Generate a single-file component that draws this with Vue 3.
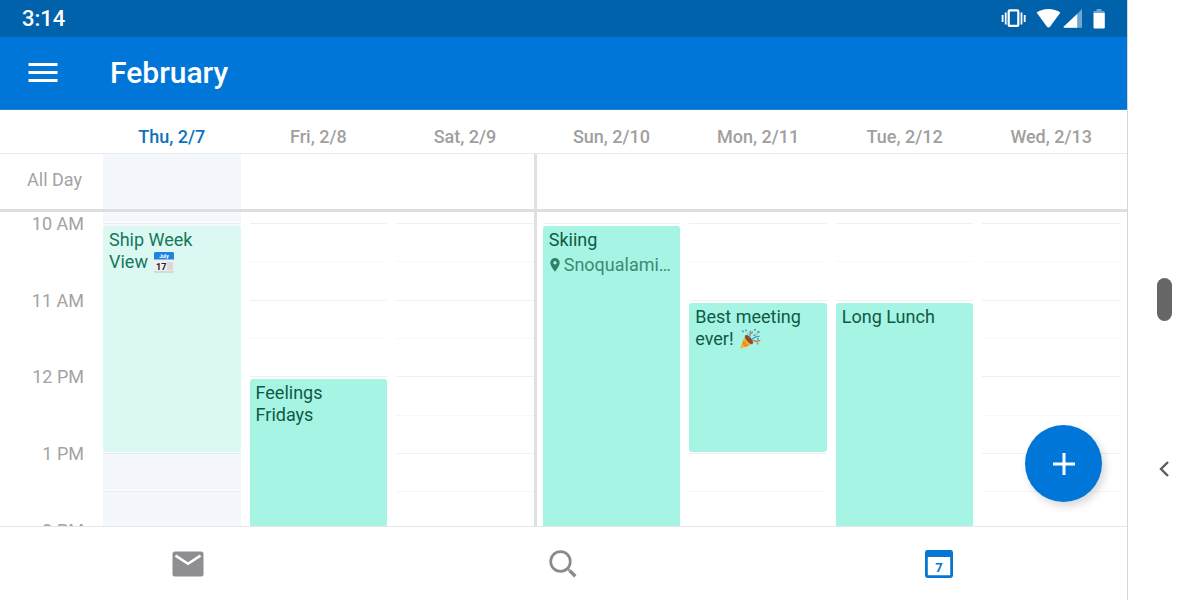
<script setup>
const hours = ['10 AM', '11 AM', '12 PM', '1 PM', '2 PM']

const days = [
  {
    label: 'Thu, 2/7',
    today: true,
    events: [{ lines: ['Ship Week', 'View'], icon: 'calendar', start: 1, end: 7, soft: true }],
  },
  { label: 'Fri, 2/8', events: [{ lines: ['Feelings', 'Fridays'], start: 5, end: 11 }] },
  { label: 'Sat, 2/9', events: [] },
  {
    label: 'Sun, 2/10',
    weekStart: true,
    events: [{ lines: ['Skiing'], place: 'Snoqualami…', start: 1, end: 13 }],
  },
  { label: 'Mon, 2/11', events: [{ lines: ['Best meeting', 'ever!'], icon: 'party', start: 3, end: 7 }] },
  { label: 'Tue, 2/12', events: [{ lines: ['Long Lunch'], start: 3, end: 11 }] },
  { label: 'Wed, 2/13', events: [] },
]
</script>

<template>
  <div class="screen">
    <div class="app">
      <div class="status">
        <span class="clock">3:14</span>
        <svg class="status-icons" width="104" height="22" viewBox="0 0 104 22" aria-hidden="true">
          <rect x="7.7" y="2.3" width="9.6" height="15.6" rx="1" fill="none" stroke="#fff" stroke-width="2.2" />
          <path d="M4.7 4.5v12M20.5 4.5v12" stroke="#fff" stroke-width="1.8" />
          <path d="M1.6 7v7M23.7 7v7" stroke="#fff" stroke-width="1.8" />
          <path d="M35.6 4.6C42-.2 53-.2 59.4 4.6L49.2 18.4Q47.5 20.4 45.8 18.4Z" fill="#fff" />
          <path d="M81 1v18.800H62.600Z" fill="#6fa6d2" />
          <path d="M76.200 6v13.800H63.500Q62 19.500 63 18.200Z" fill="#fff" />
          <path d="M95.500 1h5v2h3v2H92.500V3h3Z" fill="#6fa6d2" />
          <path d="M92.500 5h11.300v14.500q0 1-1 1h-9.300q-1 0-1-1Z" fill="#fff" />
        </svg>
      </div>

      <header class="bar">
        <button class="menu" type="button" aria-label="Menu">
          <svg width="30" height="20" viewBox="0 0 30 20"><path d="M.5 1.500h29M.5 9.500h29M.5 17.500h29" stroke="#fff" stroke-width="3" /></svg>
        </button>
        <h1>February</h1>
      </header>

      <main class="week">
        <div class="row names">
          <div class="gutter"></div>
          <div v-for="d in days" :key="d.label" class="name" :class="{ current: d.today }">{{ d.label }}</div>
        </div>
        <div class="row allday">
          <div class="gutter allday-label">All Day</div>
          <div v-for="d in days" :key="d.label" class="cell" :class="{ today: d.today, divided: d.weekStart }"></div>
        </div>
        <div class="times">
          <div class="row">
            <div class="gutter hours">
              <span v-for="h in hours" :key="h">{{ h }}</span>
            </div>
            <div v-for="d in days" :key="d.label" class="day" :class="{ today: d.today, divided: d.weekStart }">
              <i v-for="n in 12" :key="n" class="slot" :class="{ half: n % 2 === 0 }" :style="{ gridRow: n }"></i>
              <button
                v-for="e in d.events"
                :key="e.start"
                type="button"
                class="event"
                :class="{ soft: e.soft }"
                :style="{ gridRow: e.start + ' / ' + e.end }"
              >
                <span v-for="(line, i) in e.lines" :key="line" class="line">
                  {{ line }}
                  <template v-if="i === e.lines.length - 1">
                    <svg v-if="e.icon === 'calendar'" class="emoji" width="20" height="21" viewBox="0 0 20 21" aria-hidden="true">
                      <rect width="20" height="20.500" rx="1.500" fill="#b9c4c4" />
                      <path d="M0 7h20v11.500q0 1-1 1H1q-1 0-1-1Z" fill="#f0f0f0" />
                      <path d="M1.500 0h17Q20 0 20 1.500V7.500H0V1.500Q0 0 1.500 0Z" fill="#1f83e0" />
                      <path d="M13 11h6M13 13h6M13 15h6M13 17h6M14 10v8.500M16 10v8.500M18 10v8.500" stroke="#c9c3c8" stroke-width=".6" />
                      <text x="10" y="5.500" text-anchor="middle" font-size="5" font-weight="700" fill="#fff">July</text>
                      <text x="2" y="18" font-size="9" font-weight="700" fill="#222">17</text>
                    </svg>
                    <svg v-if="e.icon === 'party'" class="emoji" width="21" height="21" viewBox="0 0 21 21" aria-hidden="true">
                      <path d="M5.300 7 13 16 1.300 20.600Q.2 20.800.5 19.600Z" fill="#f7b52e" />
                      <path d="M3.500 12 8.800 17.600 5.600 18.900 2 16Z" fill="#f08c24" />
                      <ellipse cx="9" cy="11.500" rx="2.500" ry="5.600" transform="rotate(-40 9 11.500)" fill="#8b4b35" />
                      <path d="M9 9.500C12 7 8.500 5 10.700 2.800M12 11.500C14 10 15 8 19.500 8.500" fill="none" stroke="#479dca" stroke-width="1.300" />
                      <path d="M12.500 13.200C15 11 16 15 17.500 13Q18.500 12 20.300 13M17.600 14.500v2" fill="none" stroke="#cc7356" stroke-width="1.300" />
                      <path d="m10 5 2.500-2 .8 1.600-2.500 1.800Z" fill="#da7c59" />
                      <path d="M2 2.500h1.800v1.800H2ZM5.200 1.500h1.500v2H5.200ZM14 1h2v1.500h-2ZM17.500 3h2v2h-2ZM13.500 6.500h2v1.500h-2ZM17 10h1.600v1.500H17Z" fill="#3b9bd2" />
                      <path d="M7 5h1.500v1.500H7ZM16 5h1.500v1.400H16Z" fill="#e7a557" />
                    </svg>
                  </template>
                </span>
                <span v-if="e.place" class="place">
                  <svg width="10" height="14" viewBox="0 0 10 14" aria-hidden="true">
                    <path d="M5 0a4.700 4.700 0 0 0-4.700 4.700C.3 8 5 13.600 5 13.600S9.700 8 9.700 4.700A4.700 4.700 0 0 0 5 0Zm0 3a1.700 1.700 0 1 1 0 3.400A1.700 1.700 0 0 1 5 3Z" fill="#2f8067" fill-rule="evenodd" />
                  </svg>
                  <span class="place-name">{{ e.place }}</span>
                </span>
              </button>
            </div>
          </div>
          <button class="fab" type="button" aria-label="New event">
            <svg width="24" height="24" viewBox="0 0 24 24"><path d="M12 1v22M1 12h22" stroke="#fff" stroke-width="3" /></svg>
          </button>
        </div>
      </main>

      <nav class="tabs">
        <button type="button" aria-label="Mail">
          <svg width="32" height="26" viewBox="0 0 32 26">
            <rect x=".5" y=".5" width="31" height="25" rx="2.500" fill="#8e8e93" />
            <path d="M3.500 4.600 16 12.800 28.500 4.600" fill="none" stroke="#fff" stroke-width="2.600" />
          </svg>
        </button>
        <button type="button" aria-label="Search">
          <svg width="28" height="28" viewBox="0 0 28 28">
            <circle cx="11.500" cy="11.500" r="9.800" fill="none" stroke="#8a8a8a" stroke-width="2.700" />
            <path d="m18.500 18.500 1.800 1.800" stroke="#8a8a8a" stroke-width="2.200" />
            <path d="m20.500 20.500 5.800 5.800" stroke="#8a8a8a" stroke-width="3.400" />
          </svg>
        </button>
        <button type="button" aria-label="Calendar">
          <svg width="28" height="28" viewBox="0 0 28 28">
            <rect x="1.400" y="1.400" width="25.200" height="25.200" rx="1" fill="none" stroke="#0477d4" stroke-width="2.800" />
            <path d="M1 1h26v6H1Z" fill="#0477d4" />
            <text x="14" y="21.500" text-anchor="middle" font-size="13" font-weight="700" fill="#0477d4">7</text>
          </svg>
        </button>
      </nav>
    </div>

    <div class="rail">
      <button class="home" type="button" aria-label="Home"><span class="pill"></span></button>
      <button class="back" type="button" aria-label="Back">
        <svg width="10" height="16" viewBox="0 0 10 16"><path d="M9 1 2 8l7 7" fill="none" stroke="#5c5c5c" stroke-width="2.400" /></svg>
      </button>
    </div>
  </div>
</template>

<style>
body {
  background: #fff;
}
</style>

<style scoped>
.screen {
  display: flex;
  height: 100vh;
  font-family: Roboto, 'Liberation Sans', sans-serif;
  font-size: 18px;
  line-height: 22px;
}
button {
  margin: 0;
  padding: 0;
  border: 0;
  background: none;
  font: inherit;
  color: inherit;
}
svg {
  display: block;
}
.app {
  flex: 1;
  min-width: 0;
  display: flex;
  flex-direction: column;
}
.status {
  display: flex;
  align-items: center;
  justify-content: space-between;
  height: 37px;
  padding: 0 22px;
  background: #0062ab;
  color: #fff;
}
.clock {
  font-size: 22px;
  font-weight: 500;
}
.bar {
  display: flex;
  align-items: center;
  gap: 52px;
  padding: 0 28px;
  background: #0077d8;
  border-bottom: 1px solid #2b86d2;
  box-sizing: border-box;
  flex: 0 0 73px;
}
h1 {
  margin: 0;
  color: #fff;
  font-size: 30px;
  font-weight: 500;
  line-height: 36px;
}
.week {
  flex: 1;
  min-height: 0;
  display: flex;
  flex-direction: column;
}
.row {
  display: grid;
  grid-template-columns: 94px repeat(7, minmax(0, 1fr));
  column-gap: 9px;
  padding-right: 7px;
}
.gutter {
  color: #a3a3a3;
  text-align: right;
  padding-right: 10px;
}
.names {
  align-items: center;
  padding-top: 10px;
  box-sizing: border-box;
  border-bottom: 1px solid #e9ebec;
  flex: 0 0 44px;
}
.name {
  color: #a0a0a0;
  font-weight: 500;
  text-align: center;
}
.name.current {
  color: #1072bd;
}
.allday {
  flex: 0 0 55px;
  border-bottom: 3px solid #dedede;
}
.allday-label {
  padding: 15px 12px 0 0;
}
.today {
  background: #f4f8fc;
}
.divided {
  position: relative;
}
.divided::before {
  content: '';
  position: absolute;
  top: 0;
  bottom: 0;
  left: -9px;
  width: 3px;
  background: #e0e0e0;
}
.times {
  flex: 1;
  min-height: 0;
  position: relative;
  overflow: hidden;
}
.hours {
  display: grid;
  grid-template-rows: repeat(6, minmax(0, 1fr));
  height: 460px;
  padding-top: 1px;
}
.day {
  display: grid;
  grid-template-rows: repeat(12, minmax(0, 1fr));
  height: 460px;
  padding-top: 11px;
}
.slot {
  grid-column: 1;
  border-top: 1px solid #f0f0f0;
}
.slot.half {
  border-top-color: #f7f7f7;
}
.today .slot {
  border-top-color: #e9eef3;
  box-shadow: 0 -1px #fff;
}
.event {
  grid-column: 1;
  display: flex;
  flex-direction: column;
  justify-content: flex-start;
  align-items: stretch;
  margin: 3px 0 1px;
  padding: 3px 6px;
  min-width: 0;
  border-radius: 3px;
  background: #a6f4e3;
  color: #0f5a45;
  text-align: left;
}
.event.soft {
  background: #dbf9f2;
  color: #14785b;
}
.line {
  display: flex;
  align-items: center;
  gap: 6px;
  white-space: nowrap;
}
.place {
  display: flex;
  align-items: center;
  gap: 4px;
  margin-top: 3px;
  padding-left: 1px;
  color: #3d8a73;
}
.place svg {
  flex: none;
}
.place-name {
  white-space: nowrap;
}
.fab {
  position: absolute;
  right: 25px;
  bottom: 24px;
  display: grid;
  place-items: center;
  width: 77px;
  height: 77px;
  border-radius: 50%;
  background: #0077d8;
  box-shadow: 3px 4px 8px rgba(0, 0, 0, 0.16);
}
.tabs {
  flex: 0 0 73px;
  display: grid;
  grid-template-columns: repeat(3, 1fr);
  border-top: 1px solid #e6e6e6;
}
.tabs button {
  display: grid;
  place-items: center;
}
.rail {
  flex: 0 0 73px;
  display: grid;
  grid-template-rows: repeat(3, 1fr);
  padding: 46px 0;
  box-sizing: border-box;
  border-left: 1px solid #d6d6d6;
}
.rail button {
  display: grid;
  place-items: center;
}
.home {
  grid-row: 2;
}
.back {
  grid-row: 3;
}
.pill {
  width: 15px;
  height: 43px;
  border-radius: 8px;
  background: #666;
}
</style>
